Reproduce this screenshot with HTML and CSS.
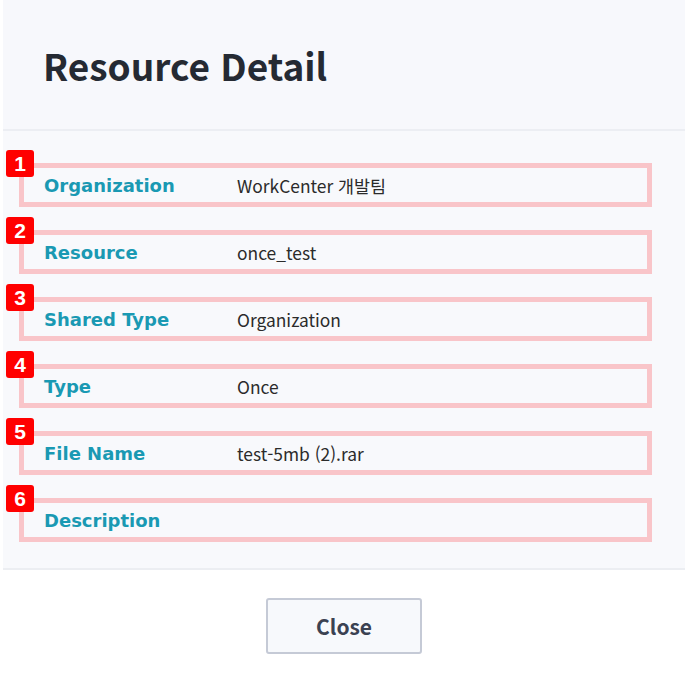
FILE: index.html
```html
<!DOCTYPE html>
<html lang="ko">
<head>
  <meta charset="UTF-8" />
  <meta name="viewport" content="width=device-width, initial-scale=1.0"/>
  <title>Resource Detail</title>
  <link rel="stylesheet" href="styles.css">
</head>
<body>

  <div class="modal">
    <header class="modal-header">
      <h1>Resource Detail</h1>
    </header>

    <section class="modal-body">
      <div class="detail-row">
        <span class="badge">1</span>
        <span class="label">Organization</span>
        <span class="value">WorkCenter 개발팀</span>
      </div>
      <div class="detail-row">
        <span class="badge">2</span>
        <span class="label">Resource</span>
        <span class="value">once_test</span>
      </div>
      <div class="detail-row">
        <span class="badge">3</span>
        <span class="label">Shared Type</span>
        <span class="value">Organization</span>
      </div>
      <div class="detail-row">
        <span class="badge">4</span>
        <span class="label">Type</span>
        <span class="value">Once</span>
      </div>
      <div class="detail-row">
        <span class="badge">5</span>
        <span class="label">File Name</span>
        <span class="value">test-5mb (2).rar</span>
      </div>
      <div class="detail-row">
        <span class="badge">6</span>
        <span class="label">Description</span>
        <span class="value"></span>
      </div>
    </section>

    <footer class="modal-footer">
      <button class="btn-close">Close</button>
    </footer>
  </div>

</body>
</html>
```

FILE: styles.css
```css
body {
  margin: 0;
  background: #ffffff;
  font-family: "Noto Sans CJK KR", "Noto Sans", sans-serif;
}
.modal {
  margin-left: 3px;
}
.modal-header {
  height: 129px;
  display: flex;
  align-items: center;
  padding-left: 40px;
  background: #f7f8fc;
  border-bottom: 2px solid #eceef3;
}
.modal-header h1 {
  margin: 0;
  font-size: 37px;
  font-weight: 700;
  color: #252a33;
}
.modal-body {
  background: #f8f9fc;
  padding: 32px 33px 26px 16px;
  border-bottom: 2px solid #eceef2;
}
.detail-row {
  position: relative;
  box-sizing: border-box;
  height: 44px;
  border: 5px solid #f9c5c9;
  display: flex;
  align-items: center;
  padding-left: 20px;
}
.detail-row + .detail-row {
  margin-top: 23px;
}
.badge {
  position: absolute;
  left: -18px;
  top: -18px;
  width: 28px;
  height: 27px;
  background: #ff0000;
  border-radius: 3px;
  color: #ffffff;
  font-family: "Liberation Sans", Arial, sans-serif;
  font-weight: 700;
  font-size: 21px;
  display: flex;
  align-items: center;
  justify-content: center;
}
.label {
  width: 193px;
  font-family: "DejaVu Sans", Verdana, sans-serif;
  font-weight: 700;
  font-size: 18px;
  color: #1a99b3;
}
.value {
  font-size: 17.4px;
  color: #2b2b2b;
}
.modal-footer {
  display: flex;
  justify-content: center;
  padding-top: 28px;
}
.btn-close {
  width: 156px;
  height: 56px;
  background: #f7f9fc;
  border: 2px solid #c5cad6;
  border-radius: 3px;
  font-family: "Noto Sans CJK KR", "Noto Sans", sans-serif;
  font-size: 21px;
  font-weight: 700;
  color: #3b4252;
  cursor: pointer;
}
```
